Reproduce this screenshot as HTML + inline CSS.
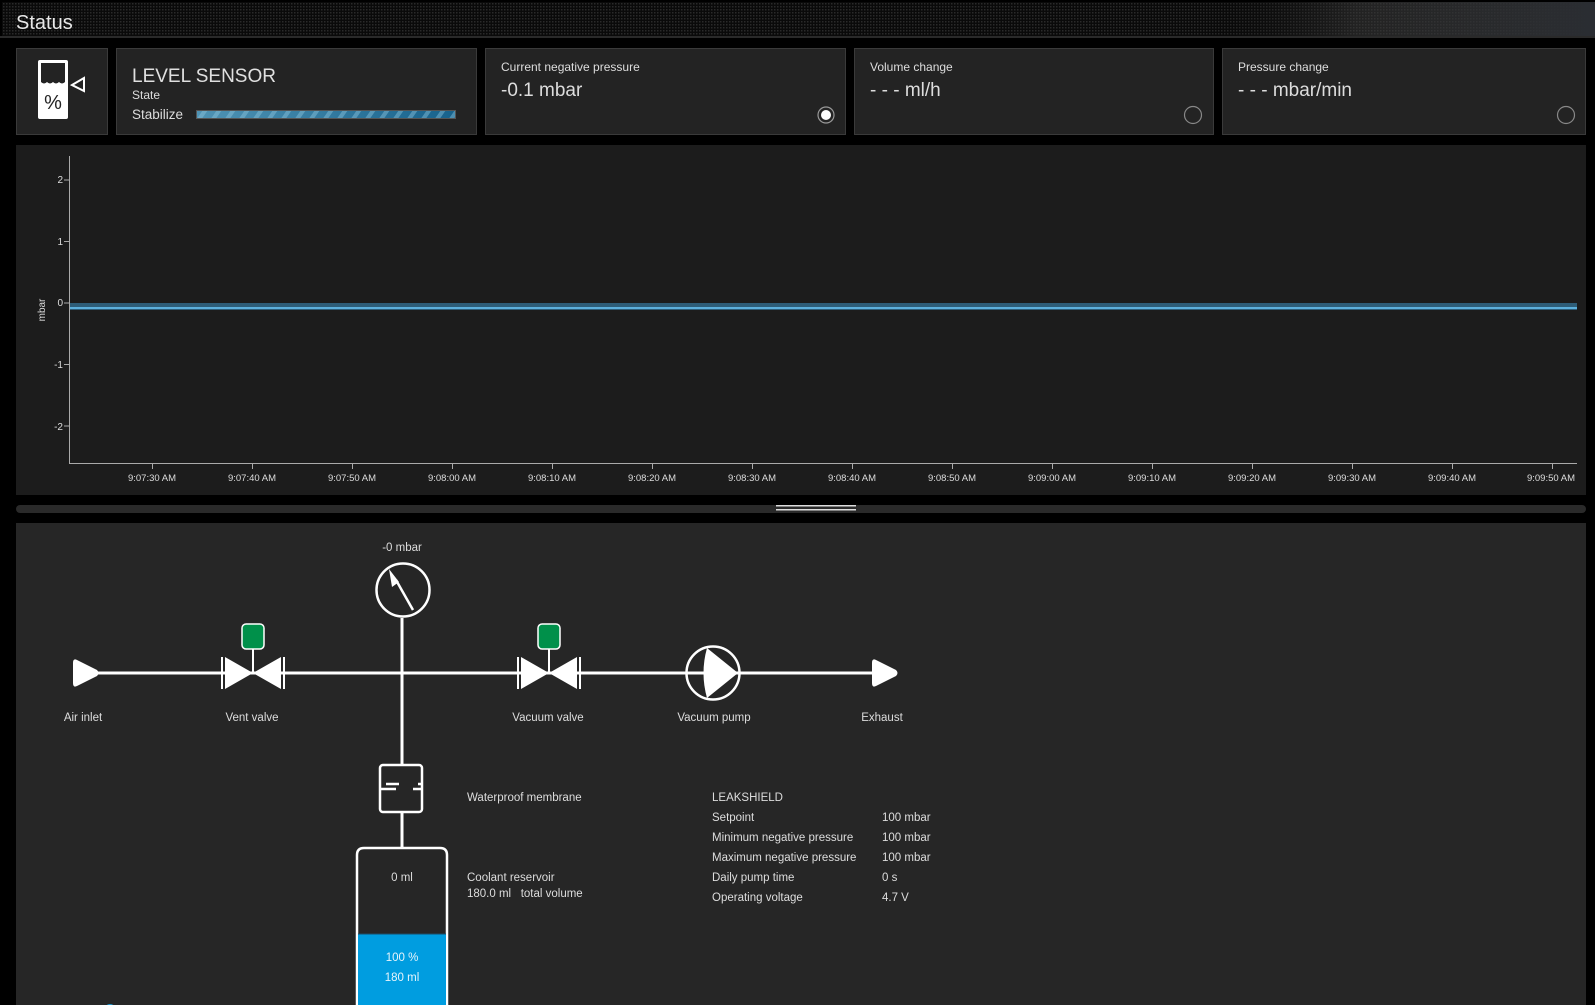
<!DOCTYPE html>
<html><head><meta charset="utf-8"><style>
html,body{margin:0;padding:0;background:#000;width:1595px;height:1005px;overflow:hidden;font-family:"Liberation Sans",sans-serif;}
svg{display:block}
text{font-family:"Liberation Sans",sans-serif;}
</style></head><body>
<svg width="1595" height="1005" viewBox="0 0 1595 1005" xmlns="http://www.w3.org/2000/svg">
<defs>
<pattern id="dots" width="3" height="3" patternUnits="userSpaceOnUse"><rect width="3" height="3" fill="#0a0a0a"/><rect width="1.5" height="1.5" fill="#2a2a2a"/></pattern>
<linearGradient id="hg" x1="0" x2="1"><stop offset="0" stop-color="#000" stop-opacity="0"/><stop offset="0.75" stop-color="#000" stop-opacity="0"/><stop offset="0.85" stop-color="#3a3a3a" stop-opacity="0.5"/><stop offset="1" stop-color="#2a2d32" stop-opacity="1"/></linearGradient>
<linearGradient id="pb" x1="0" x2="1"><stop offset="0" stop-color="#4f93b4"/><stop offset="1" stop-color="#17628c"/></linearGradient>
<pattern id="stripe" width="14" height="10" patternUnits="userSpaceOnUse" patternTransform="skewX(-35)"><rect width="14" height="10" fill="#000" fill-opacity="0"/><rect width="5" height="10" fill="#8cc4dc" fill-opacity="0.45"/></pattern>
</defs>
<rect x="0" y="0" width="1595" height="38" fill="#000"/>
<rect x="2" y="2" width="1593" height="34" fill="url(#dots)"/>
<rect x="2" y="2" width="1593" height="34" fill="url(#hg)"/>
<line x1="0" y1="37" x2="1595" y2="37" stroke="#555" stroke-width="1"/>
<text x="16" y="29" fill="#e8e8e8" font-size="20">Status</text>
<rect x="16.5" y="48.5" width="91" height="86" fill="#232323" stroke="#3a3a3a"/>
<rect x="38" y="60" width="30" height="59" rx="2" fill="#fff"/>
<path d="M41 63 H65 V82 Q62 85 59 82 Q56 85 53 82 Q50 85 47 82 Q44 85 41 82 Z" fill="#232323"/>
<text x="53" y="109" fill="#232323" font-size="20" text-anchor="middle">%</text>
<path d="M72 85 L84 78 V91 Z" fill="none" stroke="#fff" stroke-width="2"/>
<rect x="116.5" y="48.5" width="360" height="86" fill="#232323" stroke="#3a3a3a"/>
<text x="132" y="82" fill="#e0e0e0" font-size="19">LEVEL SENSOR</text>
<text x="132" y="99" fill="#ddd" font-size="12">State</text>
<text x="132" y="119" fill="#ddd" font-size="13.5">Stabilize</text>
<rect x="196.5" y="110.5" width="259" height="8" fill="url(#pb)" stroke="#555"/>
<rect x="197" y="111" width="258" height="7" fill="url(#stripe)"/>
<rect x="485.5" y="48.5" width="360" height="86" fill="#232323" stroke="#3a3a3a"/>
<text x="501" y="71" fill="#ddd" font-size="12">Current negative pressure</text>
<text x="501" y="96" fill="#ddd" font-size="19">-0.1 mbar</text>
<circle cx="826" cy="115" r="8" fill="none" stroke="#999" stroke-width="1.2"/><circle cx="826" cy="115" r="5" fill="#fff"/>
<rect x="854.5" y="48.5" width="359" height="86" fill="#232323" stroke="#3a3a3a"/>
<text x="870" y="71" fill="#ddd" font-size="12">Volume change</text>
<text x="870" y="96" fill="#ddd" font-size="19">- - - ml/h</text>
<circle cx="1193" cy="115" r="8.5" fill="none" stroke="#888" stroke-width="1.2"/>
<rect x="1222.5" y="48.5" width="363" height="86" fill="#232323" stroke="#3a3a3a"/>
<text x="1238" y="71" fill="#ddd" font-size="12">Pressure change</text>
<text x="1238" y="96" fill="#ddd" font-size="19">- - - mbar/min</text>
<circle cx="1566" cy="115" r="8.5" fill="none" stroke="#888" stroke-width="1.2"/>
<rect x="16" y="145" width="1570" height="350" fill="#1c1c1c"/>
<line x1="69.5" y1="156" x2="69.5" y2="463" stroke="#aaa"/>
<line x1="69" y1="463.5" x2="1577" y2="463.5" stroke="#aaa"/>
<g fill="#ddd" font-size="10" text-anchor="end">
<text x="63" y="183">2</text><text x="63" y="245">1</text><text x="63" y="306">0</text><text x="63" y="368">-1</text><text x="63" y="430">-2</text></g>
<g stroke="#aaa"><line x1="64" y1="180" x2="69" y2="180"/><line x1="64" y1="241.5" x2="69" y2="241.5"/><line x1="64" y1="303" x2="69" y2="303"/><line x1="64" y1="364.5" x2="69" y2="364.5"/><line x1="64" y1="426" x2="69" y2="426"/></g>
<text transform="translate(45 310) rotate(-90)" fill="#ddd" font-size="10" text-anchor="middle">mbar</text>
<rect x="70" y="303" width="1507" height="7" fill="#2e5d78"/>
<rect x="70" y="307" width="1507" height="2" fill="#5db0dc"/>
<g stroke="#aaa">
<line x1="152.5" y1="463" x2="152.5" y2="469"/><line x1="252.5" y1="463" x2="252.5" y2="469"/><line x1="352.5" y1="463" x2="352.5" y2="469"/><line x1="452.5" y1="463" x2="452.5" y2="469"/><line x1="552.5" y1="463" x2="552.5" y2="469"/><line x1="652.5" y1="463" x2="652.5" y2="469"/><line x1="752.5" y1="463" x2="752.5" y2="469"/><line x1="852.5" y1="463" x2="852.5" y2="469"/><line x1="952.5" y1="463" x2="952.5" y2="469"/><line x1="1052.5" y1="463" x2="1052.5" y2="469"/><line x1="1152.5" y1="463" x2="1152.5" y2="469"/><line x1="1252.5" y1="463" x2="1252.5" y2="469"/><line x1="1352.5" y1="463" x2="1352.5" y2="469"/><line x1="1452.5" y1="463" x2="1452.5" y2="469"/><line x1="1552.5" y1="463" x2="1552.5" y2="469"/>
</g>
<g fill="#ddd" font-size="9.5" text-anchor="middle">
<text x="152" y="481">9:07:30 AM</text><text x="252" y="481">9:07:40 AM</text><text x="352" y="481">9:07:50 AM</text><text x="452" y="481">9:08:00 AM</text><text x="552" y="481">9:08:10 AM</text><text x="652" y="481">9:08:20 AM</text><text x="752" y="481">9:08:30 AM</text><text x="852" y="481">9:08:40 AM</text><text x="952" y="481">9:08:50 AM</text><text x="1052" y="481">9:09:00 AM</text><text x="1152" y="481">9:09:10 AM</text><text x="1252" y="481">9:09:20 AM</text><text x="1352" y="481">9:09:30 AM</text><text x="1452" y="481">9:09:40 AM</text><text x="1551" y="481">9:09:50 AM</text>
</g>
<rect x="16" y="505" width="1570" height="8" rx="4" fill="#2a2a2a"/>
<rect x="776" y="505" width="80" height="1.5" fill="#ddd"/><rect x="776" y="509" width="80" height="1.5" fill="#ddd"/>
<rect x="16" y="523" width="1570" height="482" fill="#262626"/>
<g stroke="#fff" stroke-width="3" fill="none">
<line x1="95" y1="673" x2="880" y2="673"/>
<line x1="402" y1="618" x2="402" y2="765"/>
<line x1="402" y1="812" x2="402" y2="848"/>
<circle cx="403" cy="590" r="26.5" stroke-width="2.5"/>
<line x1="413" y1="610" x2="396" y2="580" stroke-width="2.5"/>
<circle cx="713" cy="673" r="26.5" stroke-width="2.5"/>
<rect x="380" y="765" width="42" height="47" rx="3" stroke-width="2.5"/>
<path d="M357 1005 V855 Q357 848 364 848 H440 Q447 848 447 855 V1005" stroke-width="2.5"/>
<line x1="253" y1="648" x2="253" y2="673" stroke-width="2"/>
<line x1="549" y1="648" x2="549" y2="673" stroke-width="2"/>
</g>
<path d="M73 663 Q73 658 77 660 L97 670 Q100 673 97 676 L77 686 Q73 688 73 683 Z" fill="#fff"/>
<path d="M872 663 Q872 658 876 660 L896 670 Q899 673 896 676 L876 686 Q872 688 872 683 Z" fill="#fff"/>
<path d="M225 657 L253 673 L225 689 Z M281 657 L253 673 L281 689 Z" fill="#fff"/>
<rect x="221" y="657" width="2" height="32" fill="#fff"/><rect x="283" y="657" width="2" height="32" fill="#fff"/>
<path d="M521 657 L549 673 L521 689 Z M577 657 L549 673 L577 689 Z" fill="#fff"/>
<rect x="517" y="657" width="2" height="32" fill="#fff"/><rect x="579" y="657" width="2" height="32" fill="#fff"/>
<rect x="242" y="624" width="22" height="25" rx="4" fill="#00904a" stroke="#fff" stroke-width="1.5"/>
<rect x="538" y="624" width="22" height="25" rx="4" fill="#00904a" stroke="#fff" stroke-width="1.5"/>
<path d="M389 569 L392 587 L399 582 Z" fill="#fff"/>
<path d="M707 648 Q700 673 707 698 L738 673 Z" fill="#fff"/>
<g stroke="#fff" stroke-width="2.5"><line x1="386" y1="784" x2="399" y2="784"/><line x1="381" y1="789" x2="396" y2="789"/><line x1="413" y1="789" x2="422" y2="789"/><line x1="418" y1="784" x2="422" y2="784"/></g>
<rect x="358" y="934" width="88" height="71" fill="#009de0"/>
<line x1="358" y1="934" x2="446" y2="934" stroke="#1d4c66" stroke-width="1"/>
<circle cx="110" cy="1010" r="6" fill="#1a9ad6"/>
<g fill="#ddd" font-size="11.5" text-anchor="middle">
<text x="402" y="551">-0 mbar</text>
<text x="83" y="721">Air inlet</text>
<text x="252" y="721">Vent valve</text>
<text x="548" y="721">Vacuum valve</text>
<text x="714" y="721">Vacuum pump</text>
<text x="882" y="721">Exhaust</text>
<text x="402" y="881">0 ml</text>
<text x="402" y="961" fill="#e6f4fb">100 %</text>
<text x="402" y="981" fill="#e6f4fb">180 ml</text>
</g>
<g fill="#ddd" font-size="11.5">
<text x="467" y="801">Waterproof membrane</text>
<text x="467" y="881">Coolant reservoir</text>
<text x="467" y="897">180.0 ml&#160;&#160;&#160;total volume</text>
<text x="712" y="801">LEAKSHIELD</text>
<text x="712" y="821">Setpoint</text><text x="882" y="821">100 mbar</text>
<text x="712" y="841">Minimum negative pressure</text><text x="882" y="841">100 mbar</text>
<text x="712" y="861">Maximum negative pressure</text><text x="882" y="861">100 mbar</text>
<text x="712" y="881">Daily pump time</text><text x="882" y="881">0 s</text>
<text x="712" y="901">Operating voltage</text><text x="882" y="901">4.7 V</text>
</g>
</svg>
</body></html>
